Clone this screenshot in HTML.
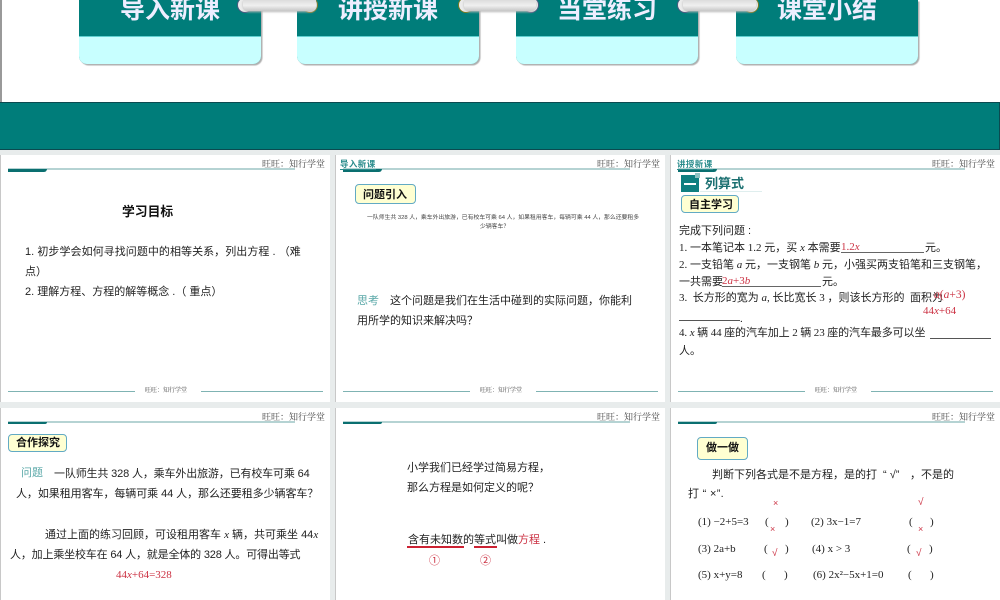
<!DOCTYPE html>
<html lang="zh"><head><meta charset="utf-8"><title>课件</title>
<style>
html,body{margin:0;padding:0}
body{width:1000px;height:600px;overflow:hidden;position:relative;background:#e8ecec;font-family:"Liberation Sans","Noto Sans CJK SC",sans-serif;color:#222;filter:blur(.3px)}
div,span.a{position:absolute}
.t{position:absolute;white-space:nowrap;font-size:11px;line-height:16px;height:16px;color:#222}
.se{font-family:"Liberation Serif","Noto Sans CJK SC",serif}
.r{color:#cc3344}
.g{color:#5aa8a8}
.b{font-weight:bold;color:#111}
i{font-family:"Liberation Serif",serif}
.slide{background:#fff;overflow:hidden;box-shadow:-1px 0 0 #c8c8c8}
.card{width:182px;height:64px;top:0;background:#007d7a;border-radius:0 0 8px 8px;overflow:hidden;box-shadow:1.5px 1.5px 1px #b0b0b0}
.card b{position:absolute;left:0;right:0;top:36px;bottom:0;background:#c8ffff;border-top:1px solid #5fd0d0}
.ct{position:absolute;top:-7px;width:182px;text-align:center;font-size:25px;line-height:30px;font-weight:bold;color:#eef;white-space:nowrap;font-family:"Noto Sans CJK SC",sans-serif}
.pill{top:0;height:11px;border-radius:0 0 6px 6px;background:linear-gradient(180deg,#dcdcdc,#f0f0f0 50%,#c6c6c6);box-shadow:0 1px 2px #bbb}
.ring{top:-3px;width:14px;height:14px;border-radius:50%;background:#ececec;border:1.5px solid #556}
.hd{position:absolute;font:9px/12px "Liberation Serif","Noto Serif CJK SC",serif;color:#444;white-space:nowrap}
.ln{height:2px;background:#b5d3d3}
.tab{height:2px;background:#0a6f70;border-radius:0 0 6px 0}
.fl{height:1px;background:#7fb3b3}
.ft{position:absolute;font:6px/8px "Liberation Serif","Noto Serif CJK SC",serif;color:#444;white-space:nowrap}
.lb{background:#ffffd2;border:1.5px solid #62aac4;border-radius:4px;box-sizing:border-box}
.tg{position:absolute;font-size:8.5px;line-height:10px;font-weight:bold;color:#2a8c8c;white-space:nowrap;letter-spacing:.4px;border-bottom:1px solid #2a8c8c}
</style></head><body>

<!-- top strip -->
<div style="left:0;top:0;width:1000px;height:102px;background:#fff"></div>
<div style="left:0;top:0;width:2px;height:102px;background:#999"></div>
<div class="card" style="left:79px"><b></b><span class="ct">导入新课</span></div>
<div class="card" style="left:297px"><b></b><span class="ct">讲授新课</span></div>
<div class="card" style="left:516px"><b></b><span class="ct">当堂练习</span></div>
<div class="card" style="left:736px"><b></b><span class="ct">课堂小结</span></div>
<div class="ring" style="left:237px;border-color:#4a5a80"></div><div class="ring" style="left:302px;border-color:#7a7a20"></div>
<div class="ring" style="left:458px;border-color:#7a7a20"></div><div class="ring" style="left:523px;border-color:#4a5a80"></div>
<div class="ring" style="left:677px;border-color:#4a5a80"></div><div class="ring" style="left:743px;border-color:#7a7a20"></div>
<div class="pill" style="left:243px;width:73px"></div>
<div class="pill" style="left:464px;width:72px"></div>
<div class="pill" style="left:683px;width:73px"></div>

<!-- band -->
<div style="left:0;top:102px;width:1000px;height:48px;background:#007d7a;box-sizing:border-box;border:1px solid #0b4a50;border-width:1px 1px 1px 0"></div>

<!-- slides -->
<div class="slide" style="left:1px;top:155px;width:329px;height:247px"></div>
<div class="slide" style="left:336px;top:155px;width:329px;height:247px"></div>
<div class="slide" style="left:671px;top:155px;width:329px;height:247px"></div>
<div class="slide" style="left:1px;top:408px;width:329px;height:192px"></div>
<div class="slide" style="left:336px;top:408px;width:329px;height:192px"></div>
<div class="slide" style="left:671px;top:408px;width:329px;height:192px"></div>

<!-- headers row1 -->
<span class="hd" style="left:262px;top:158px">旺旺：知行学堂</span>
<span class="hd" style="left:597px;top:158px">旺旺：知行学堂</span>
<span class="hd" style="left:932px;top:158px">旺旺：知行学堂</span>
<div class="ln" style="left:8px;top:168px;width:287px"></div><div class="tab" style="left:8px;top:169px;width:39px;height:3px"></div>
<div class="ln" style="left:343px;top:168px;width:287px"></div><div class="tab" style="left:343px;top:169px;width:39px;height:3px"></div>
<div class="ln" style="left:678px;top:168px;width:287px"></div><div class="tab" style="left:678px;top:169px;width:39px;height:3px"></div>
<!-- footers -->
<div class="fl" style="left:8px;top:391px;width:127px"></div><div class="fl" style="left:201px;top:391px;width:122px"></div><span class="ft" style="left:145px;top:387px">旺旺：知行学堂</span>
<div class="fl" style="left:343px;top:391px;width:127px"></div><div class="fl" style="left:536px;top:391px;width:122px"></div><span class="ft" style="left:480px;top:387px">旺旺：知行学堂</span>
<div class="fl" style="left:678px;top:391px;width:127px"></div><div class="fl" style="left:871px;top:391px;width:122px"></div><span class="ft" style="left:815px;top:387px">旺旺：知行学堂</span>
<!-- headers row2 -->
<span class="hd" style="left:262px;top:411px">旺旺：知行学堂</span>
<span class="hd" style="left:597px;top:411px">旺旺：知行学堂</span>
<span class="hd" style="left:932px;top:411px">旺旺：知行学堂</span>
<div class="ln" style="left:8px;top:421px;width:287px"></div><div class="tab" style="left:8px;top:422px;width:39px"></div>
<div class="ln" style="left:343px;top:421px;width:287px"></div><div class="tab" style="left:343px;top:422px;width:39px"></div>
<div class="ln" style="left:678px;top:421px;width:287px"></div><div class="tab" style="left:678px;top:422px;width:39px"></div>

<!-- slide 1 -->
<span class="t b" style="left:122px;top:204px;font-size:12.8px">学习目标</span>
<span class="t" style="left:25px;top:244px;letter-spacing:.05px">1. 初步学会如何寻找问题中的相等关系，列出方程 .&nbsp;（难</span>
<span class="t" style="left:25px;top:264px">点）</span>
<span class="t" style="left:25px;top:284px">2. 理解方程、方程的解等概念 .（ 重点）</span>

<!-- slide 2 -->
<span class="tg" style="left:340px;top:159px">导入新课</span>
<div class="lb" style="left:355px;top:184px;width:61px;height:20px"></div>
<span class="t b" style="left:363px;top:187px">问题引入</span>
<span class="t" style="left:367px;top:210px;font-size:5.85px;color:#444">一队师生共 328 人，乘车外出旅游，已有校车可乘 64 人，如果租用客车，每辆可乘 44 人，那么还要租多</span>
<span class="t" style="left:480px;top:219px;font-size:5.85px;color:#444">少辆客车？</span>
<span class="t g" style="left:357px;top:293px">思考</span>
<span class="t" style="left:390px;top:293px">这个问题是我们在生活中碰到的实际问题，你能利</span>
<span class="t" style="left:357px;top:313px">用所学的知识来解决吗？</span>

<!-- slide 3 -->
<span class="tg" style="left:677px;top:159px">讲授新课</span>
<div style="left:681px;top:175px;width:18px;height:17px;background:#0e7f80"></div>
<div style="left:695px;top:173px;width:5px;height:5px;background:#8fc4c4"></div>
<div style="left:684px;top:183px;width:12px;height:1.5px;background:#fff"></div>
<span class="t" style="left:705px;top:176px;font-size:13px;font-weight:bold;color:#1a6f70">列算式</span>
<div style="left:700px;top:191px;width:62px;height:1px;background:#dfeeee"></div>
<div class="lb" style="left:681px;top:195px;width:58px;height:18px"></div>
<span class="t b" style="left:689px;top:197px">自主学习</span>
<span class="t" style="left:679px;top:223px">完成下列问题 :</span>
<span class="t se" style="left:679px;top:240px">1. 一本笔记本 1.2 元，买 <i>x</i> 本需要</span>
<span class="t se r" style="left:841px;top:239px">1.2<i>x</i></span>
<div style="left:841px;top:252px;width:83px;height:1px;background:#666"></div>
<span class="t se" style="left:925px;top:240px">元。</span>
<span class="t se" style="left:679px;top:257px">2. 一支铅笔 <i>a</i> 元，一支钢笔 <i>b</i> 元，小强买两支铅笔和三支钢笔，</span>
<span class="t se" style="left:679px;top:274px">一共需要</span>
<span class="t se r" style="left:722px;top:273px">2<i>a</i>+3<i>b</i></span>
<div style="left:722px;top:286px;width:99px;height:1px;background:#666"></div>
<span class="t se" style="left:822px;top:274px">元。</span>
<span class="t se" style="left:679px;top:290px">3.&nbsp; 长方形的宽为 <i>a</i>, 长比宽长 3 ，则该长方形的&nbsp; 面积为</span>
<span class="t se r" style="left:934px;top:287px;font-size:11.5px"><i>a</i>(<i>a</i>+3)</span>
<span class="t se r" style="left:923px;top:303px">44<i>x</i>+64</span>
<div style="left:679px;top:320px;width:61px;height:1px;background:#555"></div>
<span class="t se" style="left:740px;top:311px">.</span>
<span class="t se" style="left:679px;top:325px;letter-spacing:-.1px">4. <i>x</i> 辆 44 座的汽车加上 2 辆 23 座的汽车最多可以坐</span>
<div style="left:930px;top:338px;width:61px;height:1px;background:#555"></div>
<span class="t se" style="left:679px;top:343px">人。</span>

<!-- slide 4 -->
<div class="lb" style="left:8px;top:434px;width:59px;height:18px"></div>
<span class="t b" style="left:16px;top:435px">合作探究</span>
<span class="t g" style="left:21px;top:465px">问题</span>
<span class="t" style="left:54px;top:466px;letter-spacing:-.15px">一队师生共 328 人，乘车外出旅游，已有校车可乘 64</span>
<span class="t" style="left:16px;top:486px;letter-spacing:-.07px">人，如果租用客车，每辆可乘 44 人，那么还要租多少辆客车？</span>
<span class="t" style="left:45px;top:527px">通过上面的练习回顾，可设租用客车 <i>x</i> 辆，共可乘坐 44<i>x</i></span>
<span class="t" style="left:10px;top:547px;letter-spacing:-.17px">人，加上乘坐校车在 64 人，就是全体的 328 人。可得出等式</span>
<span class="t r se" style="left:116px;top:567px">44<i>x</i>+64=328</span>

<!-- slide 5 -->
<span class="t" style="left:407px;top:460px">小学我们已经学过简易方程，</span>
<span class="t" style="left:407px;top:480px">那么方程是如何定义的呢？</span>
<span class="t" style="left:408px;top:532px">含有未知数的等式叫做<span class="r">方程</span> .</span>
<div style="left:407px;top:546px;width:57px;height:1.5px;background:#cc2233"></div>
<div style="left:474px;top:546px;width:23px;height:1.5px;background:#cc2233"></div>
<span class="t r" style="left:429px;top:553px">①</span>
<span class="t r" style="left:480px;top:553px">②</span>

<!-- slide 6 -->
<div class="lb" style="left:697px;top:437px;width:51px;height:23px"></div>
<span class="t b" style="left:706px;top:440px">做一做</span>
<span class="t" style="left:712px;top:467px">判断下列各式是不是方程，是的打</span>
<span class="t" style="left:883px;top:467px">“ √”</span>
<span class="t" style="left:910px;top:467px">，不是的</span>
<span class="t" style="left:688px;top:486px;letter-spacing:.3px">打 “ ×”.</span>
<span class="t r" style="left:773px;top:495px;font-size:9px">×</span>
<span class="t r" style="left:918px;top:495px;font-size:10px">√</span>
<span class="t r" style="left:770px;top:521px;font-size:9px">×</span>
<span class="t r" style="left:918px;top:521px;font-size:9px">×</span>
<span class="t r" style="left:772px;top:546px;font-size:10px">√</span>
<span class="t r" style="left:916px;top:546px;font-size:10px">√</span>
<span class="t se" style="left:698px;top:514px">(1) −2+5=3</span><span class="t se" style="left:765px;top:514px">(</span><span class="t se" style="left:785px;top:514px">)</span>
<span class="t se" style="left:811px;top:514px">(2) 3x−1=7</span><span class="t se" style="left:909px;top:514px">(</span><span class="t se" style="left:930px;top:514px">)</span>
<span class="t se" style="left:698px;top:541px">(3) 2a+b</span><span class="t se" style="left:764px;top:541px">(</span><span class="t se" style="left:785px;top:541px">)</span>
<span class="t se" style="left:812px;top:541px">(4) x &gt; 3</span><span class="t se" style="left:907px;top:541px">(</span><span class="t se" style="left:929px;top:541px">)</span>
<span class="t se" style="left:698px;top:567px">(5) x+y=8</span><span class="t se" style="left:762px;top:567px">(</span><span class="t se" style="left:784px;top:567px">)</span>
<span class="t se" style="left:813px;top:567px">(6) 2x²−5x+1=0</span><span class="t se" style="left:908px;top:567px">(</span><span class="t se" style="left:930px;top:567px">)</span>
</body></html>
